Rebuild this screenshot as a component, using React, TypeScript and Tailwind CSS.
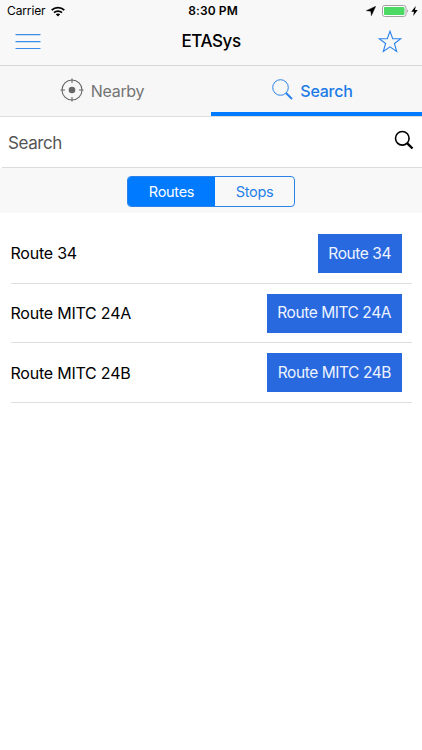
import React, { useState } from "react";

const routes = ["Route 34", "Route MITC 24A", "Route MITC 24B"];

function StatusBar() {
    return (
        <div className="flex h-[22px] items-center justify-between pl-[7px] pr-1 text-[12px] leading-none">
            <div className="flex flex-1 items-center gap-[5px]">
                <span className="tracking-[-0.01em]">Carrier</span>
                <svg className="h-[11px] w-[14px]" viewBox="0 0 14 11">
                    <g fill="none" stroke="#000" strokeWidth="1.8">
                        <path d="M0.7 4.2C4.2 0.7 9.8 0.7 13.3 4.2" />
                        <path d="M3 6.6C5.2 4.5 8.8 4.5 11 6.6" />
                    </g>
                    <path d="M7 10.6L4.8 8.3C6 7.2 8 7.2 9.2 8.3Z" />
                </svg>
            </div>
            <span className="pl-px font-semibold tracking-[0.01em]">8:30 PM</span>
            <div className="flex flex-1 items-center justify-end">
                <svg className="mr-[6px] h-[10px] w-[10px]" viewBox="0 0 10 10">
                    <path d="M9.7 0.3L5.4 9.7L4.8 5.2L0.3 4.7Z" stroke="#000" strokeWidth="0.4" />
                </svg>
                <svg className="mr-[2px] h-[12px] w-[27px]" viewBox="0 0 27 12">
                    <rect x="0.5" y="0.5" width="23.5" height="11" rx="2.3" fill="#fff" stroke="#a5a0a5" />
                    <rect x="2" y="2" width="20.5" height="8" rx="1" fill="#4cd964" />
                    <path d="M25.2 4.2C26.4 4.8 26.4 7.2 25.2 7.8Z" fill="#a5a0a5" />
                </svg>
                <svg className="h-[10px] w-[7px]" viewBox="0 0 7 10">
                    <path d="M4.7 0L0.3 5.8H3L2.2 10L6.7 4H4Z" />
                </svg>
            </div>
        </div>
    );
}

export default function App() {
    const [tab, setTab] = useState("search");
    const [mode, setMode] = useState("routes");

    return (
        <div className="min-h-screen w-full bg-white font-['Inter','Liberation_Sans',sans-serif] text-black">
            {/* Header */}
            <header className="h-[66px] border-b border-[#d6d6d8] bg-[#f8f8f8]">
                <StatusBar />
                <div className="flex h-[39px] items-center justify-between pl-[15px] pr-5">
                    <button className="flex-1" aria-label="Menu">
                        <svg className="h-[16px] w-[26px]" viewBox="0 0 26 16" stroke="#3a8ee8" strokeWidth="1.2">
                            <path d="M0.5 0.7H25.5M0.5 7.6H25.5M0.5 14.5H25.5" />
                        </svg>
                    </button>
                    <h1 className="pl-[5px] text-[17px] font-medium leading-none tracking-[-0.025em]">ETASys</h1>
                    <button className="flex flex-1 justify-end" aria-label="Favorites">
                        <svg className="h-[23px] w-[24px]" viewBox="0 0 24 23" fill="none" stroke="#2b83ea" strokeWidth="1.1">
                            <path d="M12 1.2L14.7 8.7H22.8L16.4 13.5L18.7 21.5L12 16.8L5.3 21.5L7.6 13.5L1.2 8.7H9.3Z" />
                        </svg>
                    </button>
                </div>
            </header>

            {/* Tabs */}
            <nav className="flex h-[51px] border-b border-[#dedee0] bg-[#f7f7f7] text-[16px] tracking-[-0.015em]">
                <button
                    onClick={() => setTab("nearby")}
                    className={`flex w-1/2 items-center justify-center gap-[7px] border-b-4 pr-[7px] pt-1 ${tab === "nearby" ? "border-[#007aff] text-[#1c7be6]" : "border-transparent text-[#747474]"}`}
                >
                    <svg className="mb-[2px] h-[24px] w-[24px]" viewBox="0 0 24 24" fill="none" stroke="#666" strokeWidth="1.1">
                        <circle cx="12" cy="12" r="10" />
                        <circle cx="12" cy="12" r="3.3" fill="#666" stroke="none" />
                        <path d="M12 0.5V5M12 19V23.5M0.5 12H5M19 12H23.5" />
                    </svg>
                    <span className="tracking-[-0.02em]">Nearby</span>
                </button>
                <button
                    onClick={() => setTab("search")}
                    className={`flex w-1/2 items-center justify-center gap-[7px] border-b-4 pr-2 pt-1 font-medium ${tab === "search" ? "border-[#007aff] text-[#1c7be6]" : "border-transparent text-[#747474]"}`}
                >
                    <svg className="mb-[3px] h-[21px] w-[21px]" viewBox="0 0 21 21" fill="none" stroke="#2b83ea">
                        <circle cx="8.5" cy="8.5" r="7.8" strokeWidth="1" />
                        <path d="M14 14L20 20" strokeWidth="1.9" />
                    </svg>
                    <span>Search</span>
                </button>
            </nav>

            {/* Search field */}
            <div className="ml-[2px] flex h-[51px] items-center justify-between border-b border-[#dcdadc] pl-[6px] pr-2">
                <input
                    className="w-60 bg-transparent pt-[3px] text-[17px] tracking-[-0.025em] text-[#555] outline-none placeholder:text-[#555] placeholder:opacity-100"
                    placeholder="Search"
                />
                <svg className="mb-1 h-[20px] w-[20px]" viewBox="0 0 20 20" fill="none" stroke="#000">
                    <circle cx="8.3" cy="8.3" r="6.8" strokeWidth="1.6" />
                    <path d="M12.8 12.8L18.5 18.5" strokeWidth="2.4" />
                </svg>
            </div>

            {/* Routes / Stops switch */}
            <div className="flex h-[45px] items-center justify-center bg-[#f8f8f8] pt-[1px]">
                <div className="flex h-[31px] w-[168px] overflow-hidden rounded-[4px] border border-[#2b83ea] text-[14.5px] tracking-[-0.02em]">
                    <button
                        onClick={() => setMode("routes")}
                        className={`w-[87px] pt-px ${mode === "routes" ? "bg-[#007aff] text-white" : "text-[#2480e8]"}`}
                    >
                        Routes
                    </button>
                    <button
                        onClick={() => setMode("stops")}
                        className={`flex-1 pt-px ${mode === "stops" ? "bg-[#007aff] text-white" : "text-[#2480e8]"}`}
                    >
                        Stops
                    </button>
                </div>
            </div>

            {/* Results */}
            <ul className="px-[10.5px] pt-[11.2px] text-[16px] tracking-[-0.014em]">
                {routes.map((route) => (
                    <li key={route} className="flex h-[59.6px] items-center justify-between border-b border-[#dedede] pr-[10px]">
                        <span>{route}</span>
                        <button className="h-[39px] bg-[#2869e0] px-[10.5px] text-[15.5px] tracking-[-0.028em] text-[#eef4ff]">{route}</button>
                    </li>
                ))}
            </ul>
        </div>
    );
}
